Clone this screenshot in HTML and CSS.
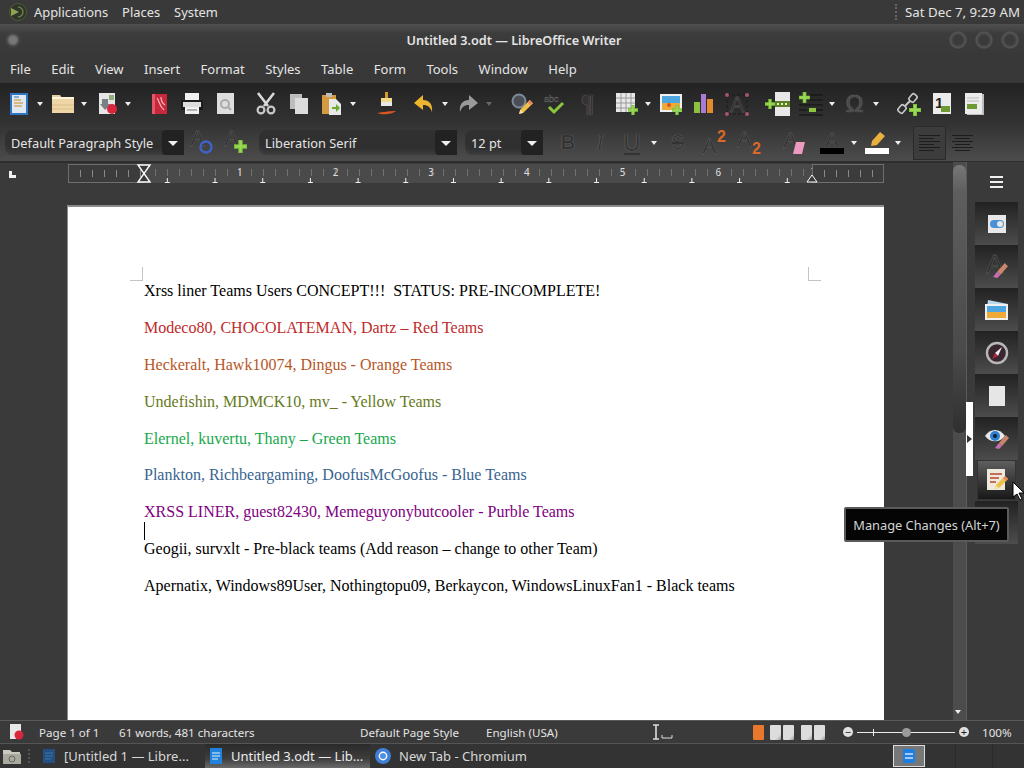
FILE: index.html
```html
<!DOCTYPE html>
<html lang="en">
<head>
  <meta charset="UTF-8" />
  <title>Untitled 3.odt — LibreOffice Writer</title>
  <link rel="stylesheet" href="styles.css">
</head>
<body>
  <svg class="defs" width="0" height="0">
    <symbol id="plus" viewBox="0 0 12 12"><path d="M4 0h4v4h4v4H8v4H4V8H0V4h4z" fill="#7ec23a"/><path d="M5 1h2v4h4v2H7v4H5V7H1V5h4z" fill="#9bd95a"/></symbol>
    <symbol id="pen" viewBox="0 0 16 16"><path d="M12 1l3 3-9 9-4 1 1-4z" fill="#eec04a"/><path d="M12 1l3 3-2 2-3-3z" fill="#e8875f"/><path d="M2 14l1-4 3 3z" fill="#f3e0b0"/></symbol>
    <symbol id="brush" viewBox="0 0 16 16"><path d="M12 1l3 3-7 8-3-3z" fill="#c9866a"/><path d="M5 9l3 3-3 3-4-1z" fill="#c56fb0"/></symbol>
  </svg>

  <header class="panel">
    <svg class="panel-logo" width="20" height="20" viewBox="0 0 20 20"><circle cx="10" cy="10" r="8.5" fill="#2f352a" stroke="#4d5a38"/><path d="M3 6l8 4-8 4z" fill="#8da34d"/><path d="M10 5a5 5 0 0 1 0 10" fill="none" stroke="#6e8240" stroke-width="1.4"/></svg>
    <span class="panel-item">Applications</span>
    <span class="panel-item">Places</span>
    <span class="panel-item">System</span>
    <span class="panel-handle"></span>
    <span class="panel-clock">Sat Dec 7, 9:29 AM</span>
  </header>

  <div class="titlebar">
    <span class="wm-btn wm-menu"></span>
    <span class="title-text">Untitled 3.odt — LibreOffice Writer</span>
    <span class="wm-btn"></span>
    <span class="wm-btn"></span>
    <span class="wm-btn"></span>
  </div>

  <nav class="menubar">
    <span>File</span><span>Edit</span><span>View</span><span>Insert</span><span>Format</span><span>Styles</span><span>Table</span><span>Form</span><span>Tools</span><span>Window</span><span>Help</span>
  </nav>

  <div class="toolbar tb-main">
    <span class="tool"><svg width="22" height="24" viewBox="0 0 22 24"><rect x="2" y="1" width="18" height="22" fill="#2f73c4"/><rect x="4" y="3" width="14" height="18" fill="#dfe9f3"/><path d="M6 8h7M6 11h9M6 14h8" stroke="#d9a860" stroke-width="1.6"/><path d="M6 5h5" stroke="#6a97c9" stroke-width="1.5"/></svg></span><i class="arrow"></i>
    <span class="tool"><svg width="24" height="22" viewBox="0 0 24 22"><path d="M1 5V2h8l2 3z" fill="#e6cf9e"/><rect x="1" y="4" width="22" height="3" fill="#fff3d8"/><rect x="1" y="6" width="22" height="14" fill="#eed6a6"/><path d="M1 12h22M1 16h22" stroke="#dcbf88"/></svg></span><i class="arrow"></i>
    <span class="tool"><svg width="22" height="24" viewBox="0 0 22 24"><rect x="3" y="1" width="16" height="21" fill="#e6e6e6"/><path d="M6 7h6v5h3l-6 6-5-6h2z" fill="#7a7f86"/><path d="M13 3h5v5h-5z" fill="#8fae7c"/><circle cx="16" cy="17" r="5" fill="#d8273d"/></svg></span><i class="arrow"></i>
    <span class="sep"></span>
    <span class="tool"><svg width="20" height="24" viewBox="0 0 20 24"><rect x="3" y="2" width="15" height="20" fill="#c9283a"/><path d="M3 2h3v20H3z" fill="#e2586a"/><path d="M8 6c3 4 2 8 7 12M12 5c0 4 1 6 4 8" stroke="#f3b8bd" fill="none" stroke-width="1.2"/></svg></span>
    <span class="tool"><svg width="24" height="24" viewBox="0 0 24 24"><rect x="5" y="1" width="14" height="8" fill="#f0f0f0"/><rect x="1" y="8" width="22" height="10" fill="#1c1c1c"/><rect x="3" y="10" width="18" height="5" fill="#dcdcdc"/><rect x="5" y="15" width="14" height="7" fill="#f0f0f0"/><path d="M7 18h10" stroke="#777"/></svg></span>
    <span class="tool"><svg width="22" height="24" viewBox="0 0 22 24"><rect x="3" y="1" width="17" height="21" fill="#dedede"/><circle cx="11" cy="12" r="4" fill="none" stroke="#aaa" stroke-width="2"/><path d="M14 15l3 3" stroke="#aaa" stroke-width="2"/></svg></span>
    <span class="sep"></span>
    <span class="tool"><svg width="22" height="24" viewBox="0 0 22 24"><path d="M3 1l10 13M19 1L9 14" stroke="#d8d8d8" stroke-width="2.6"/><circle cx="6" cy="18" r="3.4" fill="none" stroke="#c8c8c8" stroke-width="2.2"/><circle cx="16" cy="18" r="3.4" fill="none" stroke="#c8c8c8" stroke-width="2.2"/></svg></span>
    <span class="tool"><svg width="22" height="24" viewBox="0 0 22 24"><rect x="2" y="2" width="12" height="15" fill="#bdbdbd"/><rect x="7" y="6" width="13" height="16" fill="#dcdcdc"/></svg></span>
    <span class="tool"><svg width="22" height="24" viewBox="0 0 22 24"><rect x="1" y="3" width="14" height="19" fill="#d49a3f"/><rect x="5" y="1" width="6" height="4" fill="#bdbdbd"/><path d="M8 7h7l5 5v11H8z" fill="#e8e8e8"/><path d="M11 15h4v-3l4 4-4 4v-3h-4z" fill="#6cab2f"/></svg></span><i class="arrow"></i>
    <span class="sep sep-lg"></span>
    <span class="tool"><svg width="22" height="24" viewBox="0 0 22 24"><rect x="10" y="0" width="3" height="7" fill="#d79a30"/><rect x="6" y="6" width="11" height="4" fill="#f0d98a"/><rect x="6" y="10" width="11" height="4" fill="#e8e8e8"/><rect x="6" y="14" width="11" height="4" fill="#2b2b2b"/><path d="M2 21c5 2 14 2 19-2-5 0-14 1-19 2z" fill="#d9581f"/></svg></span>
    <span class="sep sep-sm"></span>
    <span class="tool"><svg width="22" height="22" viewBox="0 0 22 22"><path d="M10 2L1 10l9 7v-5c4 0 7 1 9 7 1-8-3-12-9-12z" fill="#eeb52f"/></svg></span><i class="arrow"></i>
    <span class="tool"><svg width="22" height="22" viewBox="0 0 22 22"><path d="M12 2l9 8-9 7v-5c-4 0-7 1-9 7-1-8 3-12 9-12z" fill="#9a9a9a"/></svg></span><i class="arrow arrow-off"></i>
    <span class="sep sep-lg"></span>
    <span class="tool"><svg width="24" height="24" viewBox="0 0 24 24"><circle cx="9" cy="9" r="6.5" fill="#4b4f55" stroke="#7d8a9a" stroke-width="2"/><use href="#pen" x="7" y="7" width="17" height="17"/></svg></span>
    <span class="tool"><svg width="24" height="24" viewBox="0 0 24 24"><text x="1" y="10" class="ic-dark ic-small">abc</text><path d="M6 15l5 5 9-9" fill="none" stroke="#8cc63f" stroke-width="3"/></svg></span>
    <span class="tool"><span class="glyph glyph-para">¶</span></span>
    <span class="sep sep-mid"></span>
    <span class="tool"><svg width="24" height="24" viewBox="0 0 24 24"><rect x="1" y="1" width="19" height="19" fill="#e8e8e8"/><path d="M1 6h19M1 11h19M1 16h19M6 1v19M11 1v19M16 1v19" stroke="#9a9a9a"/><use href="#plus" x="13" y="13" width="10" height="10"/></svg></span><i class="arrow"></i>
    <span class="tool"><svg width="24" height="24" viewBox="0 0 24 24"><rect x="1" y="2" width="22" height="18" fill="#f0f0f0"/><rect x="3" y="4" width="18" height="7" fill="#4da6e0"/><rect x="3" y="11" width="18" height="7" fill="#eeaa38"/><circle cx="10" cy="13" r="2" fill="#d9581f"/><use href="#plus" x="13" y="13" width="10" height="10"/></svg></span>
    <span class="tool"><svg width="24" height="24" viewBox="0 0 24 24"><rect x="2" y="10" width="6" height="11" fill="#8fbf3f"/><rect x="9" y="2" width="5" height="19" fill="#a77bd6"/><rect x="15" y="7" width="6" height="14" fill="#e58a2e"/></svg></span>
    <span class="tool"><svg width="24" height="24" viewBox="0 0 24 24"><rect x="2" y="3" width="20" height="19" fill="none" stroke="#1a1a1a" stroke-dasharray="3 2"/><text x="12" y="20" class="ic-dark ic-big" text-anchor="middle">A</text><circle cx="2" cy="3" r="2" fill="#a5566a"/><circle cx="22" cy="3" r="2" fill="#a5566a"/><circle cx="2" cy="22" r="2" fill="#a5566a"/><circle cx="22" cy="22" r="2" fill="#a5566a"/></svg></span>
    <span class="sep"></span>
    <span class="tool"><svg width="26" height="24" viewBox="0 0 26 24"><rect x="10" y="0" width="15" height="24" fill="#e8e8e8"/><rect x="10" y="9" width="15" height="6" fill="#5a7f25"/><path d="M12 12h2M16 12h2M20 12h2" stroke="#dff0c0" stroke-width="2"/><use href="#plus" x="0" y="7" width="10" height="10"/></svg></span>
    <span class="tool"><svg width="26" height="24" viewBox="0 0 26 24"><path d="M12 3h13M12 8h13M1 13h24M1 18h8M18 18h7M1 23h24" stroke="#111"/><use href="#plus" x="1" y="0" width="11" height="11"/><rect x="11" y="16" width="7" height="4" fill="#8cc63f"/></svg></span><i class="arrow"></i>
    <span class="tool"><span class="glyph glyph-omega">Ω</span></span><i class="arrow"></i>
    <span class="sep sep-lg"></span>
    <span class="tool"><svg width="24" height="24" viewBox="0 0 24 24"><rect x="2" y="13" width="6" height="8" rx="2" fill="none" stroke="#c8c8c8" stroke-width="1.6" transform="rotate(40 5 17)"/><rect x="13" y="2" width="6" height="8" rx="2" fill="none" stroke="#c8c8c8" stroke-width="1.6" transform="rotate(40 16 6)"/><path d="M8 14l5-5" stroke="#c8c8c8" stroke-width="2"/><use href="#plus" x="12" y="12" width="12" height="12"/></svg></span>
    <span class="tool"><svg width="22" height="24" viewBox="0 0 22 24"><rect x="2" y="1" width="18" height="21" fill="#ececec"/><text x="4" y="16" class="ic-num">1</text><rect x="10" y="14" width="9" height="6" fill="#6f9a33"/></svg></span>
    <span class="tool"><svg width="22" height="24" viewBox="0 0 22 24"><rect x="3" y="2" width="17" height="21" fill="#bdbdbd"/><rect x="1" y="1" width="17" height="21" fill="#ececec"/><rect x="3" y="12" width="10" height="5" fill="#6f9a33"/><path d="M3 6h12M3 9h12" stroke="#bbb"/></svg></span>
  </div>

  <div class="toolbar tb-format">
    <div class="combo combo-style"><span>Default Paragraph Style</span><b class="combo-btn"><i class="arrow arrow-big"></i></b></div>
    <span class="fmt-icon fmt-style-a"><svg width="24" height="24" viewBox="0 0 24 24"><text x="-1" y="15" class="ic-dark ic-big">A</text><circle cx="15" cy="16" r="5.5" fill="none" stroke="#3d63c9" stroke-width="2.4"/></svg></span>
    <span class="fmt-icon fmt-style-b"><svg width="24" height="24" viewBox="0 0 24 24"><text x="-1" y="15" class="ic-dark ic-big">A</text><use href="#plus" x="9" y="9" width="13" height="13"/></svg></span>
    <div class="combo combo-font"><span>Liberation Serif</span><b class="combo-btn"><i class="arrow arrow-big"></i></b></div>
    <div class="combo combo-size"><span>12 pt</span><b class="combo-btn"><i class="arrow arrow-big"></i></b></div>
    <span class="glyph glyph-fmt glyph-b">B</span>
    <span class="glyph glyph-fmt glyph-i">I</span>
    <span class="glyph glyph-fmt glyph-u">U</span><i class="arrow arrow-u"></i>
    <span class="glyph glyph-fmt glyph-s">S</span>
    <span class="fmt-icon fmt-sup"><svg width="28" height="26" viewBox="0 0 28 26"><text x="0" y="24" class="ic-dark ic-big">A</text><text x="15" y="12" class="ic-orange">2</text></svg></span>
    <span class="fmt-icon fmt-sub"><svg width="28" height="26" viewBox="0 0 28 26"><text x="-1" y="17" class="ic-dark ic-big">A</text><text x="14" y="24" class="ic-orange">2</text></svg></span>
    <span class="fmt-icon fmt-clear"><svg width="24" height="24" viewBox="0 0 24 24"><text x="-1" y="17" class="ic-dark ic-big">A</text><path d="M12 11h9l-3 12H9z" fill="#ec9ac0"/></svg></span>
    <span class="fmt-icon fmt-color"><svg width="26" height="26" viewBox="0 0 26 26"><text x="13" y="18" class="ic-dark ic-big" text-anchor="middle">A</text><rect x="1" y="18" width="24" height="6" fill="#000"/></svg></span><i class="arrow arrow-fmt"></i>
    <span class="fmt-icon fmt-mark"><svg width="26" height="26" viewBox="0 0 26 26"><path d="M16 2l5 4-8 9-6 1 1-5z" fill="#e9b23f"/><rect x="1" y="18" width="24" height="6" fill="#fff"/></svg></span><i class="arrow arrow-fmt"></i>
    <span class="align-btn align-on"><span class="lines lines-left"></span></span>
    <span class="align-btn"><span class="lines lines-center"></span></span>
  </div>

  <main class="workspace">
    <div class="doc-col">
      <div class="ruler-row">
        <span class="tab-mark"></span>
        <div class="ruler">
          <div class="ruler-margin margin-left"></div>
          <div class="ruler-body">
            <span>1</span><span>2</span><span>3</span><span>4</span><span>5</span><span>6</span><span>7</span>
          </div>
          <div class="ruler-margin margin-right"></div>
          <svg class="indent indent-left" width="16" height="19" viewBox="0 0 16 19"><path d="M2 1h12L2 18h12z" fill="#3a3a3a" stroke="#fff" stroke-width="1.4"/></svg>
          <svg class="indent indent-right" width="12" height="9" viewBox="0 0 12 9"><path d="M6 1l5 7H1z" fill="#3a3a3a" stroke="#fff"/></svg>
        </div>
      </div>
      <div class="page">
        <span class="corner corner-l"></span>
        <span class="corner corner-r"></span>
        <p>Xrss liner Teams Users CONCEPT!!!&nbsp; STATUS: PRE-INCOMPLETE!</p>
        <p></p>
        <p class="c-red">Modeco80, CHOCOLATEMAN, Dartz – Red Teams</p>
        <p></p>
        <p class="c-orange">Heckeralt, Hawk10074, Dingus - Orange Teams</p>
        <p></p>
        <p class="c-yellow">Undefishin, MDMCK10, mv_ - Yellow Teams</p>
        <p></p>
        <p class="c-green">Elernel, kuvertu, Thany – Green Teams</p>
        <p></p>
        <p class="c-blue">Plankton, Richbeargaming, DoofusMcGoofus - Blue Teams</p>
        <p></p>
        <p class="c-purple">XRSS LINER, guest82430, Memeguyonybutcooler - Purble Teams</p>
        <p><span class="caret"></span></p>
        <p>Geogii, survxlt - Pre-black teams (Add reason – change to other Team)</p>
        <p></p>
        <p>Apernatix, Windows89User, Nothingtopu09, Berkaycon, WindowsLinuxFan1 - Black teams</p>
      </div>
    </div>

    <div class="scrollbar">
      <div class="scroll-thumb"></div>
      <i class="arrow scroll-down"></i>
    </div>

    <aside class="sidebar">
      <div class="side-menu"><span></span><span></span><span></span></div>
      <div class="side-tab"><svg width="24" height="24" viewBox="0 0 24 24"><rect x="3" y="3" width="18" height="18" fill="#e8e8e8"/><rect x="5" y="8" width="14" height="8" rx="4" fill="#4a90d9"/><circle cx="15" cy="12" r="3" fill="#e8e8e8"/></svg></div>
      <div class="side-tab"><svg width="26" height="26" viewBox="0 0 26 26"><text x="2" y="19" class="ic-dark ic-huge">A</text><use href="#brush" x="8" y="8" width="17" height="17"/></svg></div>
      <div class="side-tab"><svg width="26" height="24" viewBox="0 0 26 24"><path d="M4 2l20 4-1 4H3z" fill="#bcd9ee"/><rect x="1" y="6" width="23" height="16" fill="#f0f0f0"/><rect x="3" y="8" width="19" height="6" fill="#4da6e0"/><rect x="3" y="14" width="19" height="6" fill="#eeaa38"/></svg></div>
      <div class="side-tab"><svg width="24" height="24" viewBox="0 0 24 24"><circle cx="12" cy="12" r="10" fill="#3a2630" stroke="#b8b8b8" stroke-width="2.4"/><path d="M17 6l-4 9-3-3z" fill="#eee"/><path d="M10 12l3 3-6 3z" fill="#b3263f"/></svg></div>
      <div class="side-tab"><svg width="20" height="24" viewBox="0 0 20 24"><rect x="2" y="2" width="16" height="20" fill="#e6e6e6"/></svg></div>
      <div class="side-tab"><svg width="26" height="24" viewBox="0 0 26 24"><path d="M1 9c5-8 15-8 20 0-5 7-15 7-20 0z" fill="#e8e8e8"/><circle cx="11" cy="9" r="5" fill="#2f7fd0"/><circle cx="11" cy="9" r="2" fill="#123"/><use href="#brush" x="10" y="7" width="16" height="16"/></svg></div>
      <div class="side-tab side-on"><svg width="24" height="24" viewBox="0 0 24 24"><rect x="2" y="1" width="18" height="21" fill="#efe9dc"/><path d="M5 6h12M5 10h9M5 14h6" stroke="#b8452f" stroke-width="1.5"/><use href="#pen" x="8" y="7" width="16" height="16"/></svg></div>
      <div class="side-tab"></div>
      <div class="side-handle"><i></i></div>
    </aside>

    <div class="tooltip">Manage Changes (Alt+7)</div>
    <svg class="pointer" width="13" height="20" viewBox="0 0 13 20"><path d="M1 1v15l4-3 3 6 2-1-3-6h5z" fill="#fff" stroke="#000"/></svg>
  </main>

  <footer class="statusbar">
    <svg class="status-doc" width="15" height="18" viewBox="0 0 15 18"><rect x="1" y="1" width="11" height="15" fill="#e8e8e8"/><circle cx="10" cy="12" r="4.5" fill="#d8273d"/></svg>
    <span class="st-page">Page 1 of 1</span>
    <span class="st-words">61 words, 481 characters</span>
    <span class="st-style">Default Page Style</span>
    <span class="st-lang">English (USA)</span>
    <svg class="st-cursor" width="22" height="16" viewBox="0 0 22 16"><path d="M2 1h6M2 15h6M5 1v14" stroke="#ddd" stroke-width="1.6" fill="none"/><path d="M11 11v3h10v-3" stroke="#ddd" fill="none"/></svg>
    <div class="st-views">
      <span class="page-view pv-orange"></span>
      <span class="page-view"></span><span class="page-view pv-end"></span>
      <span class="page-view"></span><span class="page-view"></span>
    </div>
    <div class="st-zoom">
      <span class="zoom-btn">−</span>
      <div class="zoom-slider"><i class="zoom-tick"></i><i class="zoom-knob"></i></div>
      <span class="zoom-btn">+</span>
    </div>
    <span class="st-percent">100%</span>
  </footer>

  <div class="taskbar">
    <svg class="task-folder" width="20" height="18" viewBox="0 0 20 18"><path d="M1 3h7l2 2h8v12H1z" fill="#c9c9c0"/><rect x="1" y="7" width="18" height="10" fill="#a9a99e"/><circle cx="10" cy="12" r="3" fill="none" stroke="#666"/></svg>
    <span class="task-handle"></span>
    <div class="task">
      <svg width="14" height="16" viewBox="0 0 14 16"><rect x="1" y="1" width="12" height="14" fill="#24507f"/><path d="M3 5h8M3 8h8M3 11h6" stroke="#3b75ad"/></svg>
      <span>[Untitled 1 — Libre...</span>
    </div>
    <div class="task task-on">
      <svg width="14" height="16" viewBox="0 0 14 16"><rect x="1" y="0" width="12" height="16" fill="#1f82dc"/><path d="M3 5h8M3 8h8M3 11h6" stroke="#e8f2fb"/></svg>
      <span>Untitled 3.odt — Lib...</span>
    </div>
    <div class="task task-chrome">
      <svg width="18" height="18" viewBox="0 0 18 18"><circle cx="9" cy="9" r="8" fill="#3f7fd6"/><circle cx="9" cy="9" r="4.4" fill="#fff"/><circle cx="9" cy="9" r="3" fill="#4f8fe6"/></svg>
      <span>New Tab - Chromium</span>
    </div>
    <div class="pager"><svg width="12" height="14" viewBox="0 0 12 14"><rect width="12" height="14" rx="1" fill="#1f7fe0"/><path d="M2 5h8M2 9h8" stroke="#cfe4fa" stroke-width="1.5"/></svg></div>
    <span class="task-line task-line-a"></span>
    <span class="task-line task-line-b"></span>
  </div>
</body>
</html>
```

FILE: styles.css
```css
:root {
  --panel: #3a3a3a;
  --text: #e4e4e4;
  --ui-font: "Noto Sans", sans-serif;
}

html, body {
  margin: 0;
  height: 100%;
}

body {
  width: 1024px;
  height: 768px;
  overflow: hidden;
  display: flex;
  flex-direction: column;
  background: var(--panel);
  color: var(--text);
  font-family: var(--ui-font);
  font-size: 13px;
}

.defs {
  position: absolute;
}

/* top gnome panel */
.panel {
  height: 24px;
  flex: none;
  display: flex;
  align-items: center;
  background: #393939;
  padding-left: 8px;
}

.panel-logo {
  margin-right: 6px;
}

.panel-item {
  margin-right: 14px;
  font-size: 12.9px;
}

.panel-handle {
  margin-left: auto;
  width: 2px;
  height: 16px;
  border-left: 2px dotted #666;
  margin-right: 6px;
}

.panel-clock {
  margin-right: 4px;
  font-size: 13.3px;
}

/* window title */
.titlebar {
  height: 32px;
  flex: none;
  display: flex;
  align-items: center;
  padding: 0 5px 0 5px;
  background: linear-gradient(#505050, #3c3c3c 30%, #383838);
}

.title-text {
  flex: 1;
  text-align: center;
  font-weight: 600;
  font-size: 12.7px;
  padding-left: 66px;
}

.wm-btn {
  width: 18px;
  height: 18px;
  border-radius: 50%;
  background: radial-gradient(#3a3a3a 35%, #545454 60%, #444 72%);
  margin-left: 8px;
}

.wm-menu {
  width: 16px;
  height: 16px;
  margin-left: 0;
  background: radial-gradient(#777 30%, #3e3e3e 60%, #555);
}

.menubar {
  height: 27px;
  flex: none;
  display: flex;
  align-items: center;
  gap: 20.5px;
  padding: 0 0 2px 10px;
  box-sizing: border-box;
  background: #383838;
}

/* toolbars */
.toolbar {
  flex: none;
  display: flex;
  align-items: center;
}

.tb-main {
  height: 41px;
  padding-left: 2px;
  background: linear-gradient(#232323, #333);
}

.tb-format {
  height: 38px;
  background: linear-gradient(#333, #4c4c4c);
  border-bottom: 1px solid #2e2e2e;
  box-sizing: border-box;
}

.tool {
  width: 33px;
  height: 26px;
  flex: none;
  display: flex;
  align-items: center;
  justify-content: center;
}

.sep { width: 8px; flex: none; }
.sep-lg { width: 10px; }
.sep-sm { width: 5px; }
.sep-mid { width: 6px; }

.arrow {
  width: 11px;
  height: 4px;
  flex: none;
  display: block;
  position: relative;
}

.arrow::after {
  content: "";
  position: absolute;
  left: 2px;
  top: 0;
  border-left: 3.5px solid transparent;
  border-right: 3.5px solid transparent;
  border-top: 4px solid #eee;
}

.arrow-off::after {
  border-top-color: #666;
}

.arrow-big::after {
  left: 0;
  border-left-width: 5.5px;
  border-right-width: 5.5px;
  border-top-width: 5px;
}

.glyph {
  color: #333;
  text-shadow: 0 0 1px #8a8a8a;
  line-height: 1;
}

.glyph-para {
  font: bold 25px "Liberation Serif", serif;
}

.glyph-omega {
  color: #4a4a4a;
  font: 24px "Liberation Sans", sans-serif;
}

.glyph-fmt {
  width: 32px;
  flex: none;
  text-align: center;
  font: 20px "Liberation Sans", sans-serif;
}

.glyph-b { margin-left: 9px; font-weight: bold; }
.glyph-i { font-style: italic; font-family: "Liberation Serif", serif; }
.glyph-u { text-decoration: underline; width: 28px; margin-left: 2px; font-size: 24px; }
.glyph-s { text-decoration: line-through; width: 36px; }
.arrow-fmt { margin-left: -1px; }
.arrow-u { margin-left: 3px; }

.ic-dark {
  fill: #303030;
  stroke: #777;
  stroke-width: 0.3;
  font-family: "Liberation Sans", sans-serif;
}

.ic-small { font-size: 9px; }
.ic-big { font-size: 22px; }
.ic-huge { font-size: 26px; }
.ic-num { fill: #222; font: bold 15px "Liberation Sans", sans-serif; }
.ic-orange { fill: #d9692a; font: bold 16px "Liberation Sans", sans-serif; }

svg {
  overflow: visible;
}

.combo {
  height: 25px;
  flex: none;
  display: flex;
  align-items: center;
  justify-content: space-between;
  background: #303030;
  border-radius: 8px 0 0 8px;
  box-shadow: inset 0 -6px 6px -4px #444;
  box-sizing: border-box;
  padding-left: 6px;
  font-size: 12.8px;
}

.combo-btn {
  width: 22px;
  height: 25px;
  display: flex;
  align-items: center;
  justify-content: center;
  background: #222;
  font-weight: normal;
  border-radius: 4px 0 0 4px;
}

.combo-style { width: 179px; margin-left: 5px; }
.combo-font { width: 198px; margin-left: 5px; }
.combo-size { width: 78px; margin-left: 8px; }

.fmt-icon {
  flex: none;
  display: flex;
  align-items: center;
  justify-content: center;
}

.fmt-style-a { margin-left: 2px; width: 34px; }
.fmt-style-b { width: 34px; }
.fmt-sup { width: 36px; margin-left: 2px; }
.fmt-sub { width: 36px; }
.fmt-clear { width: 36px; margin-left: 8px; }
.fmt-color { width: 36px; }
.fmt-mark { width: 34px; }

.align-btn {
  width: 33px;
  height: 34px;
  flex: none;
  display: flex;
  align-items: center;
  justify-content: center;
  box-sizing: border-box;
}

.align-on {
  border: 1px solid #2a2a2a;
  background: #3c3c3c;
  margin-left: 9px;
}

.lines {
  width: 21px;
  height: 16px;
  display: block;
  background-image:
    linear-gradient(#1c1c1c 0 1.5px, transparent 1.5px),
    linear-gradient(#1c1c1c 0 1.5px, transparent 1.5px);
  background-repeat: repeat-y;
}

.lines-left {
  background-size: 21px 6px, 15px 6px;
  background-position: 0 0, 0 3px;
}

.lines-center {
  background-size: 21px 6px, 15px 6px;
  background-position: center 0, center 3px;
}

/* main row */
.workspace {
  height: 558px;
  flex: none;
  display: flex;
  position: relative;
  background: var(--panel);
}

.doc-col {
  width: 953px;
  flex: none;
  overflow: hidden;
  border-top: 1px solid #2e2e2e;
  box-sizing: border-box;
}

.ruler-row {
  height: 23px;
  display: flex;
  align-items: flex-start;
  position: relative;
  padding: 1px 0 0 9px;
  box-sizing: border-box;
}

.tab-mark {
  width: 7px;
  height: 7px;
  margin-top: 7px;
  margin-right: 52px;
  box-sizing: border-box;
  border-left: 3px solid #f0f0f0;
  border-bottom: 3px solid #f0f0f0;
}

.ruler {
  width: 816px;
  height: 19px;
  display: flex;
  position: relative;
  background: #4a4a4a;
}

.ruler-margin {
  flex: none;
  box-sizing: border-box;
  border: 1px solid #6e6e6e;
  background: repeating-linear-gradient(90deg, transparent 0 11px, #8a8a8a 11px 12px) 0 5px / 100% 7px no-repeat #3c3c3c;
}

.margin-left { width: 76px; }
.margin-right { width: 72px; }

.ruler-body {
  width: 668px;
  min-width: 0;
  flex: none;
  display: flex;
  padding-left: 48px;
  box-sizing: border-box;
  color: #dcdcdc;
  font-size: 10px;
  line-height: 17px;
  background-image:
    linear-gradient(90deg, transparent 23px, #efefef 23px 24px, transparent 24px),
    linear-gradient(90deg, transparent 21px, #efefef 21px 26px, transparent 26px),
    repeating-linear-gradient(90deg, transparent 0 11px, #727272 11px 12px);
  background-size: 47.7px 5px, 47.7px 1px, 100% 7px;
  background-position: 0 100%, 0 100%, 0 5px;
  background-repeat: repeat-x, repeat-x, no-repeat;
}

.ruler-body span {
  width: 95.7px;
  flex: none;
  text-align: center;
}

.indent {
  position: absolute;
}

.indent-left {
  left: 68px;
  top: 0;
}

.indent-right {
  left: 738px;
  top: 10px;
}

.page {
  width: 817px;
  height: 515px;
  margin: 19px 0 0 67px;
  padding: 75.4px 0 0 76px;
  box-sizing: border-box;
  position: relative;
  background: #fff;
  border-top: 2px solid #8c8c8c;
  border-left: 1px solid #8c8c8c;
  color: #000;
  font-family: "Liberation Serif", serif;
  font-size: 16px;
}

.page p {
  margin: 0;
  height: 18.42px;
  line-height: 18.42px;
  white-space: nowrap;
}

.corner {
  position: absolute;
  width: 13px;
  height: 14px;
  top: 60px;
  box-sizing: border-box;
  border-bottom: 1px solid #c4c4c4;
}

.corner-l {
  left: 62px;
  border-right: 1px solid #c4c4c4;
}

.corner-r {
  left: 740px;
  border-left: 1px solid #c4c4c4;
}

.c-red { color: #c02a2a; }
.c-orange { color: #b8561f; }
.c-yellow { color: #667a22; }
.c-green { color: #17a84b; }
.c-blue { color: #38648f; }
.c-purple { color: #800080; }

.caret {
  display: block;
  width: 1px;
  height: 18px;
  background: #000;
}

/* scrollbar */
.scrollbar {
  width: 14px;
  flex: none;
  position: relative;
  box-sizing: border-box;
  background: #4c4c4c;
  border-right: 1px solid #5c5c5c;
}

.scroll-thumb {
  height: 268px;
  margin-top: 3px;
  border-radius: 6px;
  background: linear-gradient(#777, #5e5e5e 10%, #4a4a4a 70%, #2f2f2f);
}

.scroll-down {
  position: absolute;
  left: 0;
  bottom: 6px;
}

/* sidebar */
.sidebar {
  flex: 1;
  position: relative;
  padding-left: 8px;
  background: #3a3a3a;
}

.side-menu {
  width: 43px;
  height: 40px;
  display: flex;
  flex-direction: column;
  align-items: center;
  justify-content: center;
  gap: 3px;
}

.side-menu span {
  width: 13px;
  height: 2px;
  background: #efefef;
}

.side-tab {
  width: 43px;
  height: 43px;
  display: flex;
  align-items: center;
  justify-content: center;
  background: linear-gradient(#222, #4c4c4c);
}

.side-on {
  height: 40px;
  width: 39px;
  margin: 0 2px 1px;
  box-sizing: border-box;
  border: 1px solid #333;
  background: linear-gradient(#5e5e5e, #181818);
}

.side-handle {
  position: absolute;
  left: -1px;
  top: 240px;
  width: 7px;
  height: 74px;
  background: #fff;
  display: flex;
  align-items: center;
  justify-content: center;
}

.side-handle i {
  border-left: 5px solid #333;
  border-top: 4px solid transparent;
  border-bottom: 4px solid transparent;
}

.tooltip {
  position: absolute;
  left: 844px;
  top: 345px;
  width: 165px;
  height: 35px;
  box-sizing: border-box;
  display: flex;
  align-items: center;
  justify-content: center;
  background: #050505;
  border: 2px solid #5a5a5a;
  border-radius: 2px;
  color: #d4d4d4;
  font-size: 12.8px;
}

.pointer {
  position: absolute;
  left: 1012px;
  top: 319px;
}

/* status bar */
.statusbar {
  height: 23px;
  flex: none;
  display: flex;
  align-items: center;
  position: relative;
  background: #3a3a3a;
  border-top: 1px solid #5a5a5a;
  box-sizing: border-box;
  font-size: 11.6px;
  padding-left: 9px;
}

.st-page { margin-left: 15px; width: 80px; }
.st-words { width: 241px; }
.st-style { width: 126px; }
.st-lang { width: 165px; }
.st-cursor { margin-right: 80px; flex: none; }

.st-views {
  display: flex;
  width: 90px;
}

.page-view {
  width: 11px;
  height: 15px;
  background: linear-gradient(135deg, #dcdcdc 75%, #999);
  border-radius: 1px;
  margin-right: 2px;
}

.pv-orange {
  margin-right: 6px;
  background: #e8782c;
}

.pv-end { margin-right: 7px; }

.st-zoom {
  display: flex;
  align-items: center;
  gap: 4px;
}

.zoom-btn {
  width: 10px;
  height: 10px;
  border-radius: 50%;
  background: #e0e0e0;
  color: #222;
  font-size: 11px;
  line-height: 10px;
  text-align: center;
}

.zoom-slider {
  width: 98px;
  height: 1px;
  position: relative;
  background: #ececec;
}

.zoom-tick {
  position: absolute;
  left: 16px;
  top: -3px;
  width: 1px;
  height: 7px;
  background: #eee;
}

.zoom-knob {
  position: absolute;
  left: 45px;
  top: -4px;
  width: 9px;
  height: 9px;
  border-radius: 50%;
  background: #9a9a9a;
}

.st-percent {
  margin-left: 13px;
}

/* bottom task list */
.taskbar {
  height: 25px;
  flex: none;
  display: flex;
  align-items: center;
  position: relative;
  background: #333;
  border-top: 1px solid #555;
  box-sizing: border-box;
  padding-left: 2px;
  color: #d8d8d8;
}

.task-handle {
  width: 2px;
  height: 14px;
  margin: 0 6px;
  border-left: 2px dotted #555;
}

.task {
  width: 165px;
  height: 24px;
  flex: none;
  display: flex;
  align-items: center;
  gap: 8px;
  padding-left: 4px;
  margin-right: 2px;
  box-sizing: border-box;
}

.task-on {
  color: #ececec;
  background: linear-gradient(#2a2a2a, #3d3d3d 60%, #6a6a6a);
}

.task-chrome {
  gap: 7px;
  padding-left: 2px;
}

.pager {
  position: absolute;
  left: 893px;
  top: 1px;
  width: 32px;
  height: 22px;
  box-sizing: border-box;
  border: 1px solid #ddd;
  background: #777;
  display: flex;
  align-items: center;
  justify-content: center;
}

.task-line {
  position: absolute;
  top: 0;
  width: 1px;
  height: 24px;
  background: #2a2a2a;
}

.task-line-a { left: 955px; }
.task-line-b { left: 992px; }
```
